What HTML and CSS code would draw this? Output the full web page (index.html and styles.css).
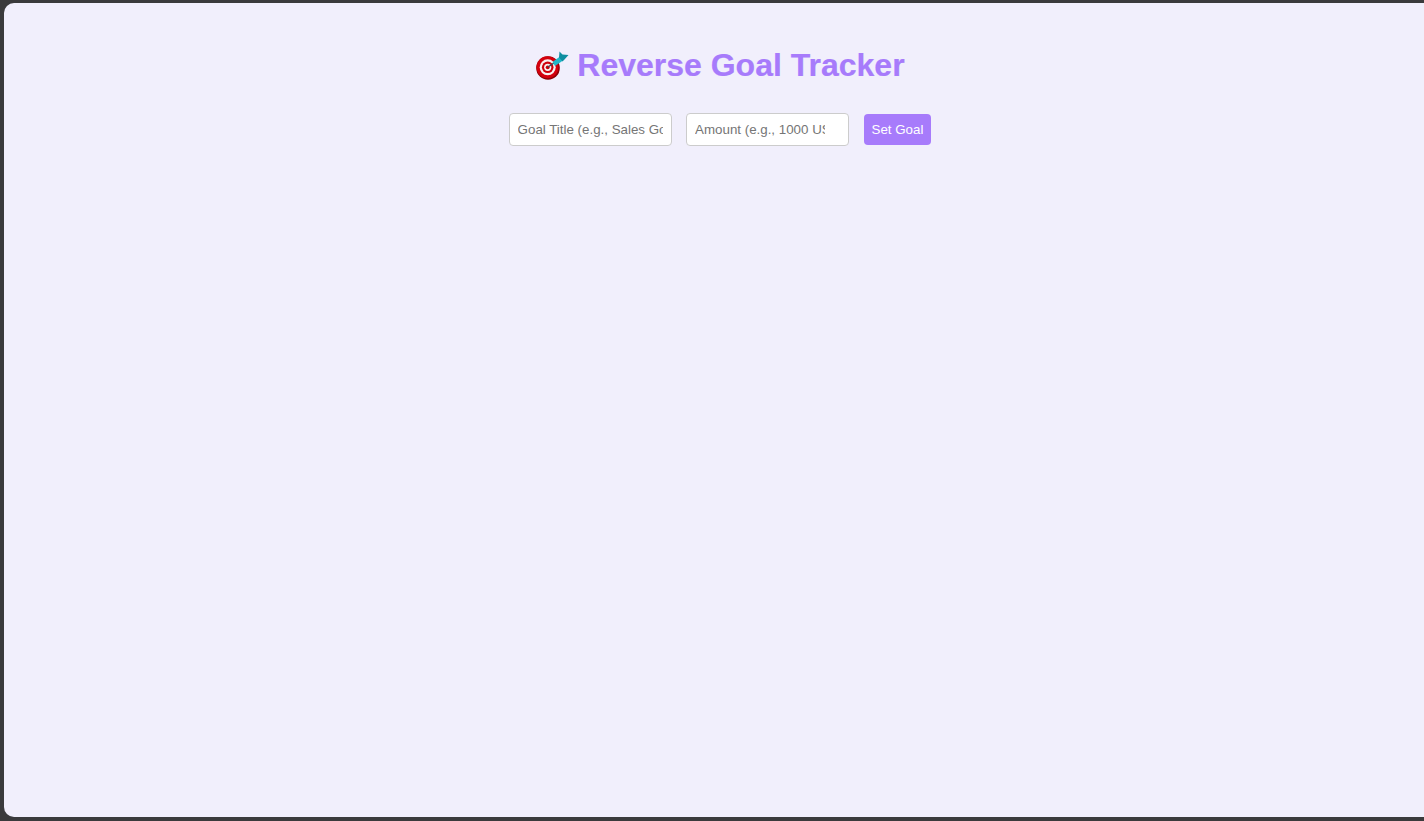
FILE: index.html
```html
<!doctype html>
<html>

<head>
  <meta charset="utf-8">
  <title>Reverse Goal Tracker</title>
  <link rel="stylesheet" href="styles.css">
</head>

<body>
  <div class="app">
    <h1 class="title">
      <svg class="target" viewBox="0 0 34 30" width="34" height="30" aria-hidden="true">
        <circle cx="13" cy="17" r="11.8" fill="#8e0006" />
        <circle cx="12.5" cy="16.3" r="11" fill="#d4000d" />
        <circle cx="12.7" cy="16.3" r="8" fill="#f8f0f0" />
        <circle cx="12.7" cy="16.3" r="5.8" fill="#cf000c" />
        <circle cx="12.7" cy="16.3" r="3.6" fill="#f8f0f0" />
        <circle cx="12.7" cy="16.3" r="1.9" fill="#c4000a" />
        <path d="M13 16 L19 12" stroke="#3e4a52" stroke-width="1.4" />
        <path d="M17.5 11 L25 5.5 L28 9.5 L20 15 Z" fill="#22b8c8" />
        <path d="M24 6.5 L24.5 0.5 L27.5 3.5 L33.5 4 L29.5 8.5 L27.5 10.5 Z" fill="#0e8ea0" />
      </svg>
      Reverse Goal Tracker
    </h1>
    <form class="goal-form">
      <input type="text" placeholder="Goal Title (e.g., Sales Goal)">
      <input type="number" placeholder="Amount (e.g., 1000 USD)">
      <button type="button">Set Goal</button>
    </form>
  </div>
</body>

</html>
```

FILE: styles.css
```css
html,
body {
  height: 100%;
  margin: 0;
  overflow: hidden;
}

body {
  background: #3a3a3c;
  padding: 3px 0 4px 4px;
  box-sizing: border-box;
  font-family: "Liberation Sans", Arial, sans-serif;
}

.app {
  height: 100%;
  box-sizing: border-box;
  padding: 44px 0 0 12px;
  background: #f1effc;
  border-radius: 10px 0 0 10px;
  text-align: center;
}

.title {
  margin: 0 0 24px;
  font-size: 32px;
  line-height: 37px;
  font-weight: bold;
  color: #a77bfb;
  -webkit-text-stroke: 0.2px #a77bfb;
}

.target {
  margin-right: -1px;
  vertical-align: -5px;
}

.goal-form {
  font-size: 16px;
}

.goal-form input {
  width: 163px;
  height: 33px;
  box-sizing: border-box;
  margin: 5px;
  padding: 8px;
  border: 1px solid #ccc;
  border-radius: 4px;
  background: #fff;
  font: 13.33px "Liberation Sans", Arial, sans-serif;
  vertical-align: middle;
}

.goal-form button {
  height: 31px;
  margin: 5px;
  padding: 0 8px;
  border: none;
  border-radius: 4px;
  background: #a77bfb;
  color: #fff;
  font: 13.33px "Liberation Sans", Arial, sans-serif;
  vertical-align: middle;
}
```
